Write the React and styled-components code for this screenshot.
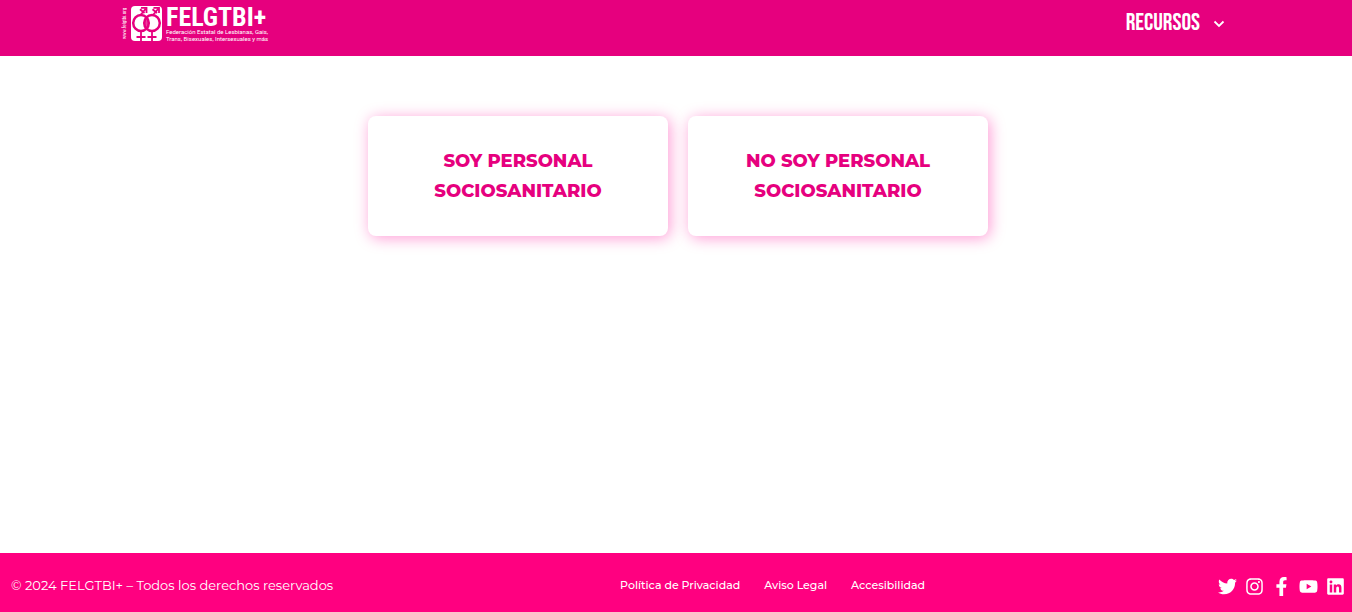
import React from "react";
import styled, { createGlobalStyle } from "styled-components";
import { FaTwitter, FaInstagram, FaFacebookF, FaYoutube, FaLinkedin } from "react-icons/fa";

const GlobalStyle = createGlobalStyle`
  *, *::before, *::after { box-sizing: border-box; }
  body {
    margin: 0;
    background: #fff;
    font-family: Montserrat, Inter, "Open Sans", sans-serif;
  }
  a { color: inherit; text-decoration: none; }
`;

const Page = styled.div`
  display: flex;
  flex-direction: column;
  min-height: 100vh;
`;

const Header = styled.header`
  background: #e6007e;
  color: #fff;
  padding: 0 16px;
`;

const HeaderInner = styled.div`
  display: flex;
  justify-content: space-between;
  align-items: flex-start;
  max-width: 1108px;
  min-height: 56px;
  margin: 0 auto;
  padding: 6px 5px 0 0;
`;

const Logo = styled.a`
  display: flex;
  align-items: flex-start;
  gap: 4px;
  font-family: Roboto, sans-serif;
`;

const LogoUrl = styled.span`
  writing-mode: vertical-rl;
  transform: rotate(180deg);
  width: 5px;
  height: 34px;
  font-family: "Roboto Condensed", Roboto, sans-serif;
  font-size: 5px;
  line-height: 5px;
  text-align: center;
  white-space: nowrap;
`;

const Emblem = styled.svg`
  width: 31px;
  height: 35px;
`;

const LogoWords = styled.span`
  display: flex;
  flex-direction: column;
`;

const LogoName = styled.span`
  font-family: "Roboto Condensed", Roboto, sans-serif;
  font-size: 26px;
  font-weight: 700;
  line-height: 22px;
`;

const LogoTagline = styled.span`
  font-size: 6px;
  line-height: 7px;
  white-space: nowrap;
`;

const MenuButton = styled.button`
  display: flex;
  align-items: center;
  gap: 13px;
  padding: 0;
  border: 0;
  background: none;
  color: inherit;
  font-family: "Bebas Neue", "Roboto Condensed", Roboto, sans-serif;
  font-size: 24px;
  font-weight: 400;
  line-height: 34px;
  cursor: pointer;
`;

const Chevron = styled.svg`
  width: 12px;
  height: 12px;
`;

const Main = styled.main`
  flex: 1;
  display: flex;
  flex-wrap: wrap;
  justify-content: center;
  align-items: flex-start;
  gap: 20px;
  padding: 60px 0 60px 4px;
`;

const Card = styled.a`
  display: flex;
  align-items: center;
  justify-content: center;
  width: 300px;
  padding: 30px 50px;
  border-radius: 8px;
  background: #fff;
  box-shadow: 2px 2px 15px rgba(255, 0, 150, 0.4);
  color: #e6007e;
  font-size: 18px;
  font-weight: 800;
  line-height: 30px;
  text-align: center;
`;

const CardLine = styled.span`
  display: block;
`;

const Footer = styled.footer`
  display: grid;
  grid-template-columns: 45fr 30fr 25fr;
  align-items: center;
  min-height: 59px;
  padding: 4px 3px 0 11px;
  background: #ff0080;
  color: #fff;
`;

const Copyright = styled.p`
  margin: 0;
  font-size: 13px;
  line-height: 20px;
`;

const FooterNav = styled.nav`
  display: flex;
  gap: 24px;
  padding-left: 7px;
  font-size: 11px;
  font-weight: 500;
  line-height: 20px;
  white-space: nowrap;
`;

const Social = styled.div`
  display: flex;
  justify-content: flex-end;
  padding-top: 4px;
`;

const SocialLink = styled.a`
  display: flex;
  justify-content: center;
  width: 27px;
  font-size: 19px;

  svg { width: auto; height: 19px; }
`;

const networks = [
  ["Twitter", FaTwitter],
  ["Instagram", FaInstagram],
  ["Facebook", FaFacebookF],
  ["YouTube", FaYoutube],
  ["LinkedIn", FaLinkedin],
];

function LogoEmblem() {
  return (
    <Emblem viewBox="0 0 31 35" fill="none" aria-hidden="true">
      <rect width="31" height="35" rx="4" fill="#fff" />
      <g stroke="#e6007e">
        <ellipse cx="10" cy="17" rx="7.800" ry="8" strokeWidth="2.5" />
        <ellipse cx="21" cy="17" rx="7.800" ry="8" strokeWidth="2.5" />
        <g strokeWidth="1.8">
          <path d="M9.500 9 14.500 3M10 1.800H15.500V7M9 3.200 13.500 7" />
          <path d="M22 9 27 3M22.500 1.800H28V7M21.500 3.200 26 7" />
          <path d="M10 25V35M5.500 31H14.500M21 25V35M16.500 31H25.500" />
        </g>
      </g>
      <path d="M15.500 11C18.500 14 18.500 20 15.500 23C12.500 20 12.500 14 15.500 11Z" fill="#e6007e" opacity=".75" />
    </Emblem>
  );
}

export default function App() {
  return (
    <Page>
      <GlobalStyle />
      <Header>
        <HeaderInner>
          <Logo href="#inicio">
            <LogoUrl>www.felgtbi.org</LogoUrl>
            <LogoEmblem />
            <LogoWords>
              <LogoName>FELGTBI+</LogoName>
              <LogoTagline>Federación Estatal de Lesbianas, Gais,</LogoTagline>
              <LogoTagline>Trans, Bisexuales, Intersexuales y más</LogoTagline>
            </LogoWords>
          </Logo>
          <MenuButton type="button" aria-haspopup="true">
            RECURSOS
            <Chevron viewBox="0 0 12 12" fill="none" stroke="currentColor" strokeWidth="1.8" aria-hidden="true">
              <path d="M1.500 4.500 6 9 10.500 4.500" />
            </Chevron>
          </MenuButton>
        </HeaderInner>
      </Header>
      <Main>
        <Card href="#personal">
          <span>
            <CardLine>SOY PERSONAL</CardLine> <CardLine>SOCIOSANITARIO</CardLine>
          </span>
        </Card>
        <Card href="#no-personal">
          <span>
            <CardLine>NO SOY PERSONAL</CardLine> <CardLine>SOCIOSANITARIO</CardLine>
          </span>
        </Card>
      </Main>
      <Footer>
        <Copyright>© 2024 FELGTBI+ – Todos los derechos reservados</Copyright>
        <FooterNav>
          <a href="#privacidad">Política de Privacidad</a>
          <a href="#aviso">Aviso Legal</a>
          <a href="#accesibilidad">Accesibilidad</a>
        </FooterNav>
        <Social>
          {networks.map(([name, Icon]) => (
            <SocialLink key={name} href={`#${name.toLowerCase()}`} aria-label={name}>
              <Icon />
            </SocialLink>
          ))}
        </Social>
      </Footer>
    </Page>
  );
}
